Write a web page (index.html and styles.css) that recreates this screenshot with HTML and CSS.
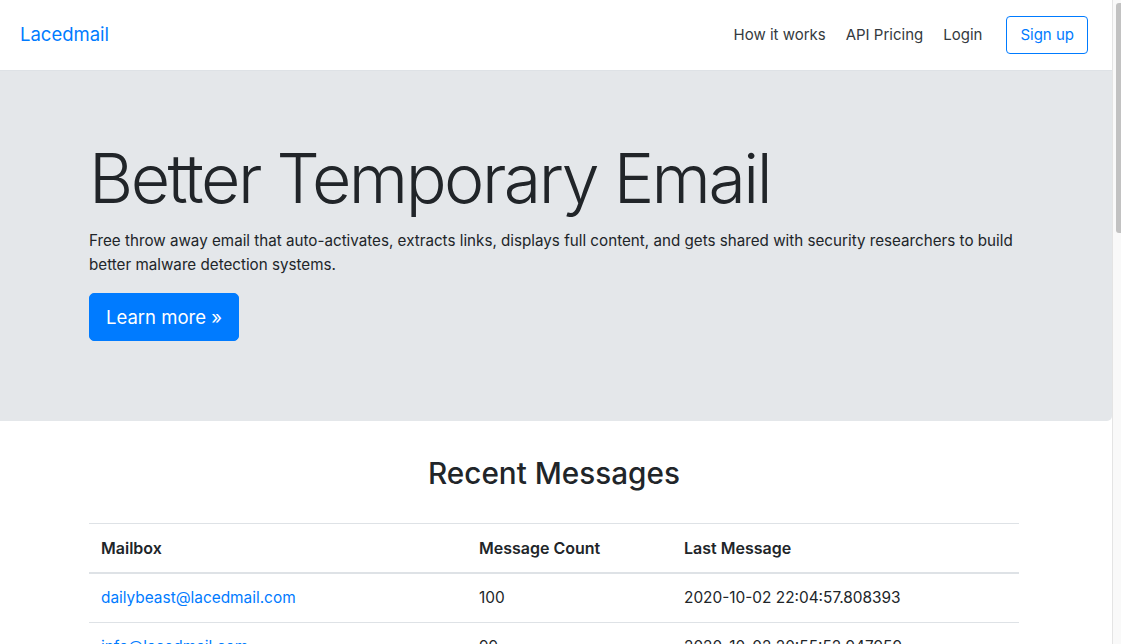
FILE: index.html
```html
<!DOCTYPE html>
<html lang="en">
<head>
    <meta charset="UTF-8">
    <meta name="viewport" content="width=device-width, initial-scale=1.0">
    <title>Lacedmail - Better Temporary Email</title>
    <link rel="stylesheet" href="styles.css">
</head>
<body>
    <div class="page">
        <nav class="navbar">
            <a class="brand" href="#">Lacedmail</a>
            <div class="nav-links">
                <a class="nav-link" href="#">How it works</a>
                <a class="nav-link" href="#">API Pricing</a>
                <a class="nav-link" href="#">Login</a>
                <a class="btn-outline" href="#">Sign up</a>
            </div>
        </nav>

        <div class="jumbotron">
            <div class="container">
                <h1>Better Temporary Email</h1>
                <p>Free throw away email that auto-activates, extracts links, displays full content, and gets shared with security researchers to build better malware detection systems.</p>
                <p class="cta"><a class="btn-primary" href="#">Learn more &raquo;</a></p>
            </div>
        </div>

        <div class="container">
            <h2>Recent Messages</h2>
            <table class="messages">
                <thead>
                    <tr>
                        <th class="col-mailbox">Mailbox</th>
                        <th class="col-count">Message Count</th>
                        <th>Last Message</th>
                    </tr>
                </thead>
                <tbody>
                    <tr><td><a href="#">dailybeast@lacedmail.com</a></td><td>100</td><td>2020-10-02 22:04:57.808393</td></tr>
                    <tr><td><a href="#">info@lacedmail.com</a></td><td>99</td><td>2020-10-02 20:55:52.947959</td></tr>
                    <tr><td><a href="#">newsletter@lacedmail.com</a></td><td>87</td><td>2020-10-02 19:41:12.302114</td></tr>
                    <tr><td><a href="#">test@lacedmail.com</a></td><td>76</td><td>2020-10-02 18:17:03.551820</td></tr>
                    <tr><td><a href="#">support@lacedmail.com</a></td><td>64</td><td>2020-10-02 17:09:44.128761</td></tr>
                    <tr><td><a href="#">admin@lacedmail.com</a></td><td>58</td><td>2020-10-02 15:32:28.774019</td></tr>
                    <tr><td><a href="#">hello@lacedmail.com</a></td><td>51</td><td>2020-10-02 14:02:51.093345</td></tr>
                    <tr><td><a href="#">shopping@lacedmail.com</a></td><td>47</td><td>2020-10-02 12:48:36.660172</td></tr>
                    <tr><td><a href="#">spam@lacedmail.com</a></td><td>42</td><td>2020-10-02 11:25:10.418905</td></tr>
                    <tr><td><a href="#">deals@lacedmail.com</a></td><td>38</td><td>2020-10-02 09:57:19.235548</td></tr>
                    <tr><td><a href="#">john@lacedmail.com</a></td><td>33</td><td>2020-10-02 08:14:47.902631</td></tr>
                    <tr><td><a href="#">random@lacedmail.com</a></td><td>29</td><td>2020-10-02 06:36:05.347782</td></tr>
                    <tr><td><a href="#">signup@lacedmail.com</a></td><td>24</td><td>2020-10-02 04:51:58.611290</td></tr>
                    <tr><td><a href="#">news@lacedmail.com</a></td><td>19</td><td>2020-10-02 02:22:41.086413</td></tr>
                    <tr><td><a href="#">trial@lacedmail.com</a></td><td>15</td><td>2020-10-01 23:40:16.529907</td></tr>
                    <tr><td><a href="#">demo@lacedmail.com</a></td><td>11</td><td>2020-10-01 21:13:33.770458</td></tr>
                    <tr><td><a href="#">alerts@lacedmail.com</a></td><td>8</td><td>2020-10-01 18:05:27.194621</td></tr>
                    <tr><td><a href="#">foo@lacedmail.com</a></td><td>5</td><td>2020-10-01 15:48:09.823057</td></tr>
                    <tr><td><a href="#">bar@lacedmail.com</a></td><td>3</td><td>2020-10-01 12:30:54.460198</td></tr>
                    <tr><td><a href="#">temp@lacedmail.com</a></td><td>2</td><td>2020-10-01 09:11:02.318864</td></tr>
                </tbody>
            </table>
        </div>

        <footer class="footer">
            <div class="container">&copy; Lacedmail 2020</div>
        </footer>
    </div>

    <!-- window scrollbar, as the browser drew it -->
    <div class="scrollbar"><div class="scrollbar-thumb"></div></div>
</body>
</html>
```

FILE: styles.css
```css
* {
    box-sizing: border-box;
}

body {
    margin: 0;
    display: flex;
    font-family: Inter, "Noto Sans", "Liberation Sans", sans-serif;
    font-size: 16px;
    line-height: 1.5;
    color: #212529;
    background: #fff;
}

a {
    color: #007bff;
    text-decoration: none;
}

.page {
    flex: 1;
    min-width: 0;
}

.scrollbar {
    position: sticky;
    top: 0;
    flex: none;
    align-self: flex-start;
    width: 9px;
    height: 100vh;
    padding: 3px 0 0 3px;
    background: #f9f9f9;
    border-left: 1px solid #e4e4e4;
}

.scrollbar-thumb {
    height: 230px;
    background: #c2c2c2;
    border-radius: 3px 0 0 3px;
}

.container {
    width: 100%;
    max-width: 960px;
    margin: 0 auto;
    padding: 0 17px 0 13px;
}

/* Navbar */
.navbar {
    display: flex;
    align-items: center;
    justify-content: space-between;
    padding: 16px 24px 16px 20px;
    border-bottom: 1px solid #dee2e6;
}

.brand {
    font-size: 18.5px;
    line-height: 1.5;
}

.nav-links {
    display: flex;
    align-items: center;
    font-size: 15px;
    line-height: 24px;
}

.nav-link {
    color: #343a40;
    padding: 0 10px;
}

.btn-outline {
    margin-left: 14px;
    padding: 6px 13px;
    border: 1px solid #007bff;
    border-radius: 4px;
    color: #007bff;
}

/* Hero */
.jumbotron {
    background: #e4e7ea;
    padding: 64px 0;
    margin-bottom: 35px;
    border-radius: 0 0 5px 0;
}

h1 {
    margin: 0 0 8px;
    font-size: 68px;
    font-weight: 300;
    line-height: 86px;
    letter-spacing: -2.5px;
}

.jumbotron p {
    margin: 0 0 16px;
    font-size: 15.2px;
    line-height: 24px;
}

.btn-primary {
    display: inline-block;
    padding: 8px 16px;
    border: 1px solid #007bff;
    border-radius: 5px;
    background: #007bff;
    color: #fff;
    font-size: 18.5px;
    line-height: 30px;
}

/* Recent messages */
h2 {
    margin: 0 0 31px;
    font-size: 29.7px;
    font-weight: 500;
    line-height: 1.2;
    text-align: center;
}

.messages {
    width: 100%;
    border-collapse: collapse;
    margin-bottom: 16px;
}

.messages th,
.messages td {
    padding: 12px;
    border-top: 1px solid #dee2e6;
    text-align: left;
    vertical-align: top;
    font-size: 15.4px;
    line-height: 24px;
}

.messages thead th {
    border-bottom: 2px solid #dee2e6;
    font-size: 16px;
    font-weight: 600;
}

.col-mailbox {
    width: 378px;
}

.col-count {
    width: 205px;
}

.footer {
    padding: 40px 0 56px;
    color: #6c757d;
    font-size: 14px;
    text-align: center;
}
```
